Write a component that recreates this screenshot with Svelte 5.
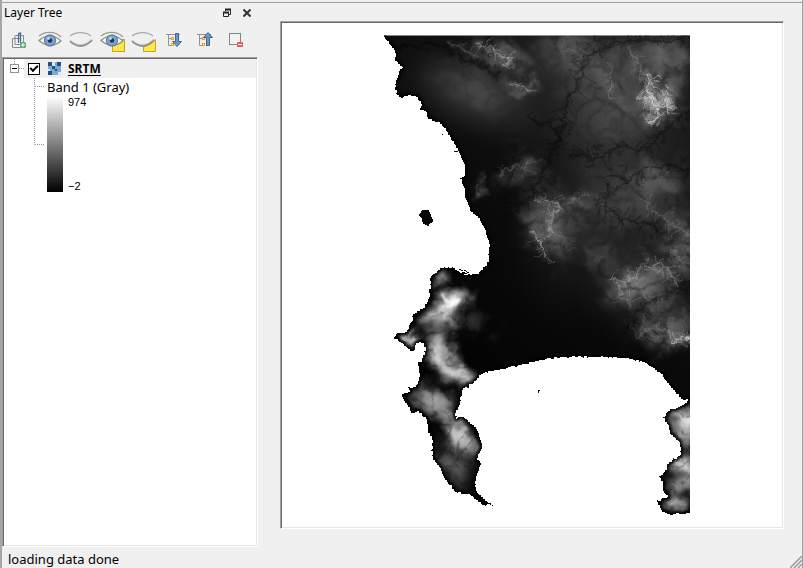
<script>
  let visible = $state(true);
  let expanded = $state(true);

  // Deterministic noise so the terrain is identical on every render.
  function noise(seed) {
    let s = seed;
    return () => {
      s = (s * 1664525 + 1013904223) % 4294967296;
      return s / 4294967296;
    };
  }

  // Breaks every segment into short whole-pixel steps for a raster shoreline.
  function shoreline(text, seed, rough = 1.6) {
    const rnd = noise(seed);
    const pts = text.trim().split(/\s+/).map((p) => p.split(',').map(Number));
    let d = '';
    pts.forEach(([x, y], i) => {
      const [nx, ny] = pts[(i + 1) % pts.length];
      const len = Math.hypot(nx - x, ny - y);
      const n = len > 110 ? 1 : Math.max(1, Math.round(len / 2));
      for (let k = 0; k < n; k++) {
        const j = k ? (rnd() - 0.5) * rough : 0;
        const px = Math.round(x + ((nx - x) * k) / n + j);
        const py = Math.round(y + ((ny - y) * k) / n + j);
        d += d ? `H${px}V${py}` : `M${px},${py}`;
      }
    });
    return d + 'Z';
  }

  // A ridge or stream with spurs leaving it on both sides.
  function spurs(text, seed, reach) {
    const rnd = noise(seed);
    const pts = text.trim().split(/\s+/).map((p) => p.split(',').map(Number));
    let d = '';
    for (let i = 0; i < pts.length - 1; i++) {
      const [x, y] = pts[i];
      const [nx, ny] = pts[i + 1];
      const a = Math.atan2(ny - y, nx - x);
      const n = Math.max(1, Math.round(Math.hypot(nx - x, ny - y) / 3));
      for (let k = 0; k < n; k++) {
        const px = x + ((nx - x) * k) / n;
        const py = y + ((ny - y) * k) / n;
        const side = rnd() > 0.5 ? 1 : -1;
        const b = a + side * (0.7 + rnd() * 0.8);
        const r = reach * (0.3 + rnd() * 0.8);
        const mx = px + Math.cos(b) * r * 0.5;
        const my = py + Math.sin(b) * r * 0.5;
        const c = b + (rnd() - 0.5) * 1.2;
        d += `M${px.toFixed(1)},${py.toFixed(1)}L${mx.toFixed(1)},${my.toFixed(1)}l${(Math.cos(c) * r * 0.5).toFixed(1)},${(Math.sin(c) * r * 0.5).toFixed(1)}`;
      }
    }
    return d;
  }

  const mainland = shoreline(
    `379,31 382,35 386,40 394,50 396,57 395,61 403,68 399,72 398,78 395,85 396,94 401,98 407,96 415,96
     419,101 422,106 420,110 426,112 428,119 435,122 441,124 450,137 455,145 458,151 463,162 465,168
     464,177 460,179 462,183 464,188 466,200 470,211 478,218 485,230 489,242 489,260 485,267 480,272
     472,275 465,271 458,271 455,268 445,267 441,268 437,273 431,278 431,289 427,289 430,295 428,302
     423,309 413,314 412,322 407,332 397,334 394,339 401,343 410,351 415,349 416,343 423,343 426,351
     423,358 418,366 420,377 416,387 408,387 410,392 400,395 407,405 411,413 417,411 427,420 428,432
     432,440 432,450 433,460 440,468 445,480 455,492 470,495 482,505 493,505 487,501 478,493 475,485
     477,473 481,463 477,458 482,448 480,437 476,427 470,422 464,417 457,419 456,412 460,403 462,390
     473,383 477,378 483,373 500,369 520,365 545,359 565,357 600,357 625,358 645,363 655,370 660,373
     665,380 673,390 681,399 688,399 687,403 670,411 663,418 669,427 670,434 680,443 681,455 670,462
     664,473 659,477 663,483 664,493 668,497 657,502 662,512 667,514 683,514 694,512 694,31`,
    7
  );
  const robben = shoreline('422,210 428,210 431,215 433,222 429,226 423,223 422,218 419,214', 3, 1);

  // x, y, rx, ry, opacity, rotation
  const plains = [
    [475, 95, 95, 50, 0.16, 20], [560, 60, 80, 50, 0.1, 0], [610, 120, 110, 100, 0.11, 0],
    [625, 200, 100, 80, 0.09, 0], [650, 50, 80, 40, 0.12, 0], [575, 260, 80, 80, 0.05, 0],
    [550, 222, 50, 50, 0.08, 0], [645, 290, 70, 60, 0.12, 0]
  ];
  const hills = [
    [475, 85, 80, 34, 0.1, 20], [567, 48, 36, 20, 0.2, 0], [610, 110, 80, 70, 0.12, 0],
    [655, 98, 42, 42, 0.42, 40], [500, 56, 54, 22, 0.26, 22], [524, 172, 42, 32, 0.2, 0],
    [625, 205, 90, 60, 0.13, 0], [550, 225, 40, 52, 0.28, -15], [640, 284, 56, 42, 0.36, 0],
    [670, 328, 52, 38, 0.34, 0], [684, 242, 36, 48, 0.28, 0], [655, 180, 50, 30, 0.2, 0],
    [600, 70, 50, 40, 0.18, 0], [663, 58, 46, 34, 0.24, 0], [522, 88, 30, 12, 0.2, 15],
    [580, 198, 28, 16, 0.22, 0], [600, 255, 30, 22, 0.14, 0], [478, 192, 12, 16, 0.2, 0],
    [472, 322, 30, 24, 0.16, 0]
  ];
  const mountains = [
    [443, 312, 36, 21, 0.75, -35], [455, 299, 24, 13, 0.6, -25], [440, 350, 22, 38, 0.7, -12],
    [458, 374, 34, 17, 0.75, 20], [408, 339, 16, 12, 0.8, 0], [440, 280, 16, 14, 0.4, -30],
    [434, 401, 40, 22, 0.55, 28], [450, 420, 30, 18, 0.35, 40], [462, 438, 34, 19, 0.75, 45],
    [452, 462, 42, 34, 0.34, 50], [688, 422, 34, 26, 0.9, 0], [684, 440, 18, 20, 0.4, 0],
    [684, 465, 30, 20, 0.8, 0], [684, 484, 30, 18, 0.5, 0], [676, 504, 22, 15, 0.6, 0]
  ];

  const ridges = [
    { p: '450,44 466,51 476,57', o: 0.2, r: 8 },
    { p: '476,43 490,47 502,56 511,60 505,67', o: 0.38, r: 10 },
    { p: '510,84 521,87 534,92', o: 0.32, r: 5 },
    { p: '627,48 637,62 643,80 650,94', o: 0.2, r: 10 },
    { p: '648,74 650,94 656,106 662,116 650,123', o: 0.6, r: 15 },
    { p: '638,96 647,99 656,106 665,104 672,103', o: 0.55, r: 14 },
    { p: '668,87 666,99 671,115', o: 0.45, r: 11 },
    { p: '610,66 610,80 612,100', o: 0.2, r: 7 },
    { p: '500,176 516,165 525,169 531,159', o: 0.2, r: 13 },
    { p: '475,187 479,196', o: 0.18, r: 4 },
    { p: '535,202 552,203 560,206 550,219 548,231', o: 0.32, r: 12 },
    { p: '533,233 541,244 546,258', o: 0.42, r: 12 },
    { p: '548,230 562,238 570,250', o: 0.14, r: 12 },
    { p: '571,200 581,196 590,194', o: 0.18, r: 8 },
    { p: '643,201 656,213 672,224 682,231 690,234', o: 0.2, r: 11 },
    { p: '611,280 623,284 636,276 642,268 658,263 668,269 677,284', o: 0.32, r: 15 },
    { p: '616,286 620,296 630,306', o: 0.24, r: 15 },
    { p: '668,249 682,260 690,264', o: 0.2, r: 12 },
    { p: '636,337 652,328 668,332 689,339', o: 0.18, r: 18 },
    { p: '670,341 681,339 690,338', o: 0.5, r: 12 },
    { p: '560,46 578,52', o: 0.1, r: 12 },
    { p: '594,260 608,258', o: 0.08, r: 8 }
  ];

  const streams = [
    { p: '600,46 587,57 580,78 568,100 562,130 554,150 545,170 530,195 515,215', r: 16 },
    { p: '690,38 660,42 630,38 610,45 600,46', r: 12 },
    { p: '690,110 665,130 645,150 620,145 600,158 570,155', r: 16 },
    { p: '690,170 665,165 645,170 625,180 604,172', r: 16 },
    { p: '690,280 670,293 650,300 635,315 630,330', r: 14 },
    { p: '606,185 608,210 622,220 640,222 660,232', r: 15 },
    { p: '530,118 550,125 562,140', r: 13 },
    { p: '395,47 420,46 440,44 470,62 500,75', r: 8 }
  ];

  const peaks = [
    'M442,293l6,4 10,4 -8,4 -11,1', 'M449,303l5,-4 5,-4 6,-3', 'M457,300l-8,6 -10,3 -10,8 -8,4',
    'M453,307l-6,8', 'M432,345l4,5 2,6 5,7', 'M436,358l8,10 10,6 14,5'
  ];
  const slopes = [
    'M415,395l14,6 14,8 10,8', 'M421,390l12,8 16,6', 'M454,430l9,8 13,7 3,7',
    'M451,432l18,5 8,9', 'M450,381l10,-5 13,-1', 'M400,338l8,0 5,5', 'M437,275l6,-5 -4,10',
    'M670,419l8,5 12,9', 'M674,414l16,-4', 'M673,468l10,-3 7,-7', 'M677,474l13,7',
    'M669,505l8,-6 11,4', 'M672,483l7,9', 'M437,337l8,-7 -4,16'
  ];
  const gullies = [
    'M424,384l14,4 20,1', 'M427,428l12,3 10,10', 'M428,351l-5,12', 'M420,330l14,4 12,-5',
    'M663,418l14,1', 'M660,477l15,-1 13,-2', 'M668,498l14,-2 8,-6', 'M429,370l10,13 18,5',
    'M684,440l-2,14 8,-1', 'M440,445l13,12 22,6'
  ];

  const tools = ['Add group', 'Show all layers', 'Hide all layers', 'Show selected layers', 'Hide selected layers', 'Expand all', 'Collapse all', 'Remove layer'];
</script>

{#snippet openEye()}
  <path d="M4 6C9 2 19 0 26 7" fill="none" stroke="#999b93" stroke-width="1.3" />
  <path d="M4 10.500Q15 1 26 11Q15 20 4 10.500Z" fill="#f8f8f7" stroke="#8b8d86" stroke-width="1.2" />
  <circle cx="15" cy="10.500" r="5.600" fill="#7ba3d3" stroke="#4b6d96" />
  <circle cx="15" cy="10.500" r="2.300" fill="#24384f" />
  <circle cx="13.500" cy="8.500" r="1.300" fill="#dbe8f7" />
{/snippet}

{#snippet closedEye()}
  <path d="M4 6C9 2 19 1 25 6" fill="none" stroke="#a9aaa6" stroke-width="1.2" />
  <path d="M4 11Q15 21 26 10" fill="none" stroke="#8f908c" stroke-width="2.200" />
  <path d="M5 11Q15 19 25 10" fill="none" stroke="#d2d3cf" stroke-width=".7" />
{/snippet}

{#snippet treeLines()}
  <path d="M7 4.500H21M9.500 5V15.500H12M9.500 8.500H12" fill="none" stroke="#929292" />
  <path d="M12 7h3v3h-3zM12 13h3v3h-3z" fill="#f39a1d" />
  <path d="M13 8h1v1h-1zM13 14h1v1h-1z" fill="#fff" />
{/snippet}

{#snippet ellipses(list)}
  {#each list as [x, y, rx, ry, o, turn]}
    <ellipse cx={x} cy={y} {rx} {ry} opacity={o} fill="url(#hill)" transform="rotate({turn} {x} {y})" />
  {/each}
{/snippet}

<div class="window">
  <main>
    <section class="dock" aria-label="Layer Tree">
      <header>
        <h1>Layer Tree</h1>
        <button class="mini" aria-label="Float">
          <svg width="10" height="10" viewBox="0 0 10 10"><path d="M3.500 3V1.500H8.500V6.500H7M1.500 4.500H6.500V8.500H1.500Z" fill="none" stroke="#222" /><path d="M3 1.500H9M1 4.500H7" stroke="#222" stroke-width="2" /></svg>
        </button>
        <button class="mini" aria-label="Close">
          <svg width="10" height="10" viewBox="0 0 10 10"><path d="M1.500 1.500L8.500 8.500M8.500 1.500L1.500 8.500" stroke="#333" stroke-width="2" /></svg>
        </button>
      </header>

      <div class="toolbar" role="toolbar" aria-label="Layer tools">
        {#each tools as name, i}
          <button aria-label={name}>
            <svg width="31" height="22" viewBox="0 0 31 22">
              {#if i === 0}
                <path d="M8.500 8.500V17.500H16.500V8.500ZM11.500 5.500H19.500V14.500M11 5.500V14.500H19" fill="none" stroke="#8b8b8b" />
                <path d="M14.500 13V5q0-2 2-2V12" fill="none" stroke="#45739c" stroke-width="1.3" />
                <rect x="16" y="12" width="6" height="6" rx="1.500" fill="#65a878" />
                <path d="M19 13V17M17 15H21" stroke="#fff" />
              {:else if i === 1}
                {@render openEye()}
              {:else if i === 2}
                {@render closedEye()}
              {:else if i === 3}
                <rect x="15.500" y="9.500" width="12" height="12" fill="#fde74c" stroke="#c9a413" />
                {@render openEye()}
              {:else if i === 4}
                <path d="M15.500 21.500V17Q23 15 27.500 9.500V21.500Z" fill="#fde74c" stroke="#c9a413" />
                {@render closedEye()}
              {:else if i === 5}
                {@render treeLines()}
                <path d="M16.500 3.500H19.500V11.500H22.500L18 16.500L13.500 11.500H16.500Z" fill="#6898c7" stroke="#3d668f" />
              {:else if i === 6}
                {@render treeLines()}
                <path d="M16.500 15.500H19.500V7.500H22.500L18 2.500L13.500 7.500H16.500Z" fill="#6898c7" stroke="#3d668f" />
              {:else}
                <rect x="8.500" y="3.500" width="11" height="11" fill="#f3f3f3" stroke="#858585" />
                <rect x="16" y="12" width="6" height="5" rx="1" fill="#ed5460" />
                <path d="M17 14.500H21" stroke="#fff" />
              {/if}
            </svg>
          </button>
        {/each}
      </div>

      <div class="tree sunken">
        <div class="layer">
          <button class="expander" aria-label="Toggle legend" aria-expanded={expanded} onclick={() => (expanded = !expanded)}>
            <svg width="20" height="19" viewBox="0 0 20 19">
              <path d="M10.500 0V5M15 9.500H20" stroke="#999" stroke-dasharray="1 1" />
              <rect x="6.500" y="5.500" width="8" height="8" fill="#fff" stroke="#919191" />
              <path d="M8 9.500H13" stroke="#000" />
            </svg>
          </button>
          <div class="row">
            <input id="srtm" type="checkbox" bind:checked={visible} />
            <svg width="13" height="13" viewBox="0 0 13 13" shape-rendering="crispEdges">
              <rect width="13" height="13" fill="#75aadb" />
              <path d="M0 0H4V4H0ZM9 0H13V4H9ZM4 4H7V7H4ZM7 7H9V9H7ZM0 9H4V13H0Z" fill="#24507b" />
              <path d="M4 0H7V4H4ZM0 7H2V9H0ZM10 10H13V13H10Z" fill="#dce9f5" />
            </svg>
            <label for="srtm">SRTM</label>
          </div>
        </div>
        {#if expanded}
          <div class="legend">
            <svg class="branch" width="12" height="67" viewBox="0 0 12 67"><path d="M.5 0V66.500M1 8.500H10M1 66.500H10" fill="none" stroke="#999" stroke-dasharray="1 1" /></svg>
            <div class="band">
              <span>Band 1 (Gray)</span>
              <div class="ramp">
                <div class="bar"></div>
                <div class="range"><span>974</span><span>−2</span></div>
              </div>
            </div>
          </div>
        {/if}
      </div>
    </section>

    <section class="canvas sunken" aria-label="Map canvas">
      {#if visible}
        <svg class="map" viewBox="281 22 502 506" role="img" aria-label="SRTM elevation">
          <defs>
            <clipPath id="extent"><path d="M380,35.500H690V516H380Z" shape-rendering="crispEdges" /></clipPath>
            <clipPath id="land"><path d={mainland} shape-rendering="crispEdges" /></clipPath>
            <filter id="b1" filterUnits="userSpaceOnUse" x="370" y="20" width="340" height="510"><feGaussianBlur stdDeviation=".8" /></filter>
            <filter id="b2" filterUnits="userSpaceOnUse" x="370" y="20" width="340" height="510"><feGaussianBlur stdDeviation="2" /></filter>
            <filter id="crease" filterUnits="userSpaceOnUse" x="350" y="0" width="390" height="550" color-interpolation-filters="sRGB">
              <feTurbulence type="fractalNoise" baseFrequency=".04" numOctaves="4" seed="21" result="w" />
              <feDisplacementMap in="SourceGraphic" in2="w" scale="44" xChannelSelector="R" yChannelSelector="G" result="s" />
              <feTurbulence type="turbulence" baseFrequency=".045" numOctaves="5" seed="12" />
              <feColorMatrix values="0 0 0 0 1  0 0 0 0 1  0 0 0 0 1  2.2 0 0 0 .28" result="n" />
              <feComposite in="s" in2="n" operator="in" />
              <feGaussianBlur stdDeviation=".5" />
            </filter>
            <filter id="streaks" filterUnits="userSpaceOnUse" x="370" y="20" width="350" height="510" color-interpolation-filters="sRGB">
              <feTurbulence type="fractalNoise" baseFrequency=".06" numOctaves="3" seed="8" result="w" />
              <feDisplacementMap in="SourceGraphic" in2="w" scale="20" xChannelSelector="R" yChannelSelector="G" result="s" />
              <feTurbulence type="turbulence" baseFrequency=".06" numOctaves="3" seed="5" />
              <feColorMatrix values="0 0 0 0 1  0 0 0 0 1  0 0 0 0 1  1.6 0 0 0 .6" result="n" />
              <feComposite in="s" in2="n" operator="in" />
              <feGaussianBlur stdDeviation=".5" />
            </filter>
            <filter id="warp" filterUnits="userSpaceOnUse" x="370" y="20" width="340" height="510" color-interpolation-filters="sRGB">
              <feTurbulence type="fractalNoise" baseFrequency=".09" numOctaves="3" seed="4" result="n" />
              <feDisplacementMap in="SourceGraphic" in2="n" scale="13" xChannelSelector="R" yChannelSelector="G" />
              <feGaussianBlur stdDeviation=".7" />
            </filter>
            <radialGradient id="hill">
              <stop offset="0" stop-color="#fff" />
              <stop offset=".25" stop-color="#fff" stop-opacity=".8" />
              <stop offset=".5" stop-color="#fff" stop-opacity=".42" />
              <stop offset=".75" stop-color="#fff" stop-opacity=".12" />
              <stop offset="1" stop-color="#fff" stop-opacity="0" />
            </radialGradient>
            <linearGradient id="base" gradientUnits="userSpaceOnUse" x1="440" y1="330" x2="640" y2="90">
              <stop offset="0" stop-color="#040404" /><stop offset=".45" stop-color="#0b0b0b" /><stop offset="1" stop-color="#171717" />
            </linearGradient>
          </defs>
          <g clip-path="url(#extent)">
            <g clip-path="url(#land)">
              <rect x="380" y="35" width="310" height="480" fill="url(#base)" />
              {@render ellipses(plains)}
              <g filter="url(#crease)">{@render ellipses(hills)}</g>
              <g filter="url(#streaks)">{@render ellipses(mountains)}</g>
              <g fill="none" stroke="#000" stroke-linejoin="round" filter="url(#warp)">
                {#each streams as s, i}
                  <polyline points={s.p} stroke-width="3" opacity=".28" />
                  <path d={spurs(s.p, 40 + i, s.r)} stroke-width="1.500" opacity=".26" />
                {/each}
              </g>
              <g fill="none" stroke="#fff" stroke-linecap="round" stroke-linejoin="round">
                <g filter="url(#b2)">
                  {#each ridges as r}
                    <polyline points={r.p} stroke-width="7" opacity={r.o * 0.2} />
                  {/each}
                  {#each slopes as d}<path {d} stroke-width="5" opacity=".2" />{/each}
                  {#each peaks as d}<path {d} stroke-width="6" opacity=".4" />{/each}
                </g>
                <g filter="url(#warp)">
                  {#each ridges as r, i}
                    <polyline points={r.p} stroke-width="1.600" opacity={r.o * 0.6} />
                    <path d={spurs(r.p, 11 + i, r.r)} stroke-width="1.300" opacity={r.o * 0.5} />
                  {/each}
                </g>
                <g filter="url(#b1)">
                  <path d="M442,294l4,7 6,1 8,-3 -4,5 -9,2M686,338h4" stroke-width="2.500" opacity=".85" />
                </g>
              </g>
              <g fill="none" stroke="#000" stroke-width="3" opacity=".5" filter="url(#b2)">
                {#each gullies as d}<path {d} />{/each}
              </g>
              <path d={mainland} fill="none" stroke="#000" stroke-width="4" opacity=".8" filter="url(#b1)" />
            </g>
          </g>
          <path d={robben} fill="#050505" shape-rendering="crispEdges" />
          <path d="M442,134h1v1h-1zM454,151h4v1h-4zM538,390h2v1h-1v2h-1z" fill="#111" shape-rendering="crispEdges" />
          <path d="M457,270l5,3M461,269l6,4M464,274l4,1M467,270l3,4" stroke="#fff" shape-rendering="crispEdges" />
          <path d="M459,269l4,2M464,270l5,3" stroke="#000" shape-rendering="crispEdges" />
        </svg>
      {/if}
    </section>
  </main>

  <footer>
    <output>loading data done</output>
    <svg width="12" height="12" viewBox="0 0 12 12"><path d="M0 12L12 0M4 12L12 4M8 12L12 8" stroke="#999" stroke-width="1.500" /></svg>
  </footer>
</div>

<style>
  :global(body) {
    margin: 0;
    background: #f0f0f0;
  }
  .window {
    box-sizing: border-box;
    min-height: 100vh;
    display: flex;
    flex-direction: column;
    border-left: 2px solid #a6a6a6;
    border-right: 1px solid #a0a0a0;
    background: #f0f0f0;
    color: #000;
    font: 13px/18px 'Noto Sans', 'Open Sans', sans-serif;
  }
  main {
    flex: 1;
    display: flex;
    gap: 22px;
    border-top: 1px solid #a0a0a0;
    margin-top: 2px;
    padding-right: 18px;
  }
  .dock {
    width: 256px;
    flex: none;
    display: flex;
    flex-direction: column;
  }
  header {
    display: flex;
    align-items: center;
    height: 20px;
    padding: 0 1px 0 2px;
  }
  h1 {
    flex: 1;
    margin: 0;
    font-size: 12px;
    font-weight: 400;
  }
  button {
    appearance: none;
    border: 0;
    padding: 0;
    background: none;
    font: inherit;
  }
  svg {
    display: block;
  }
  .mini {
    width: 20px;
    height: 18px;
    display: grid;
    place-items: center;
  }
  .toolbar {
    display: flex;
    height: 27px;
    padding: 7px 2px 0;
    align-items: flex-start;
  }
  .sunken {
    border: 1px solid;
    border-color: #a0a0a0 #fff #fff #a0a0a0;
    box-shadow: inset 1px 1px #696969, inset -1px -1px #e6e6e6;
    background: #fff;
  }
  .tree {
    flex: 1;
    padding: 1px;
  }
  .layer {
    display: flex;
  }
  .expander {
    width: 20px;
  }
  .row {
    flex: 1;
    display: flex;
    align-items: center;
    height: 19px;
    padding-left: 4px;
    background: #f0f0f0;
  }
  input {
    appearance: none;
    box-sizing: border-box;
    width: 12px;
    height: 12px;
    margin: 0 8px 0 0;
    border: 1px solid #000;
    background: #fff;
    display: grid;
    place-items: center;
  }
  input:checked::after {
    content: '';
    box-sizing: border-box;
    width: 8px;
    height: 5px;
    border: solid #000;
    border-width: 0 0 2px 2px;
    transform: translateY(-1px) rotate(-45deg);
  }
  label {
    margin-left: 7px;
    font-size: 12px;
    font-weight: 700;
    text-decoration: underline;
    text-underline-offset: 2px;
  }
  .legend {
    display: flex;
    padding-left: 30px;
  }
  .band {
    padding-left: 1px;
  }
  .ramp {
    display: flex;
    gap: 5px;
  }
  .bar {
    width: 16px;
    height: 96px;
    background: linear-gradient(#fff, #000);
  }
  .range {
    display: flex;
    flex-direction: column;
    justify-content: space-between;
    font: 11px/12px 'Liberation Sans', sans-serif;
  }
  .canvas {
    flex: 1;
    min-width: 0;
    display: flex;
    margin: 18px 0;
  }
  .map {
    width: 100%;
    min-height: 0;
    flex: 1;
  }
  footer {
    display: flex;
    justify-content: space-between;
    align-items: flex-end;
    height: 21px;
    padding-left: 6px;
  }
  output {
    line-height: 18px;
  }
</style>
